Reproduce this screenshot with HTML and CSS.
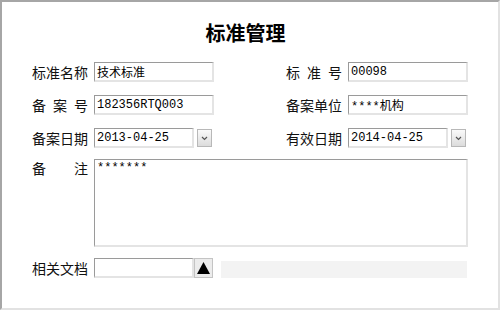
FILE: index.html
```html
<!DOCTYPE html>
<html lang="zh-CN">
<head>
  <meta charset="UTF-8" />
  <title>标准管理</title>
  <link rel="stylesheet" href="styles.css">
</head>
<body>
  <div class="frame">
    <h1 class="title">标准管理</h1>

    <div class="form">
      <!-- row 1 -->
      <div class="row">
        <label class="lbl">标准名称</label>
        <input class="txt" type="text" value="技术标准">
        <span></span>
        <label class="lbl">标准号</label>
        <input class="txt" type="text" value="00098">
      </div>

      <!-- row 2 -->
      <div class="row">
        <label class="lbl">备案号</label>
        <input class="txt" type="text" value="182356RTQ003">
        <span></span>
        <label class="lbl">备案单位</label>
        <input class="txt" type="text" value="****机构">
      </div>

      <!-- row 3: dates -->
      <div class="row row-last">
        <label class="lbl">备案日期</label>
        <div class="date">
          <input class="txt" type="text" value="2013-04-25">
          <span class="drop">
            <svg width="7" height="5" viewBox="0 0 7 5"><path d="M1 1 L3.5 3.5 L6 1" fill="none" stroke="#555" stroke-width="1.2"/></svg>
          </span>
        </div>
        <span></span>
        <label class="lbl">有效日期</label>
        <div class="date">
          <input class="txt" type="text" value="2014-04-25">
          <span class="drop">
            <svg width="7" height="5" viewBox="0 0 7 5"><path d="M1 1 L3.5 3.5 L6 1" fill="none" stroke="#555" stroke-width="1.2"/></svg>
          </span>
        </div>
      </div>

      <!-- memo -->
      <div class="row memo">
        <label class="lbl">备注</label>
        <textarea class="area">*******</textarea>
      </div>

      <!-- attachment -->
      <div class="row">
        <label class="lbl">相关文档</label>
        <div class="file">
          <input class="txt" type="text" value="">
          <span class="up">
            <svg width="13" height="12" viewBox="0 0 13 12"><path d="M6.5 0 L13 12 L0 12 Z" fill="#000"/></svg>
          </span>
        </div>
        <div class="bar"></div>
      </div>
    </div>
  </div>
</body>
</html>
```

FILE: styles.css
```css
body {
  margin: 0;
  background: #fff;
  font-family: "Noto Sans CJK SC", "Liberation Sans", sans-serif;
  color: #000;
}
.frame {
  width: 500px;
  height: 310px;
  box-sizing: border-box;
  border-top: 2px solid #a6a6a6;
  border-left: 2px solid #a6a6a6;
  border-right: 2px solid #e2e2e2;
  border-bottom: 2px solid #e2e2e2;
  background: #fff;
}
.title {
  margin: 0;
  padding: 17px 9px 0 0;
  height: 28px;
  line-height: 28px;
  text-align: center;
  font-size: 20px;
  font-weight: 700;
}
.form {
  padding: 15px 0 0 30px;
}
.row {
  display: grid;
  grid-template-columns: 56px 120px 60px 56px 120px;
  column-gap: 6px;
  height: 20px;
  margin-bottom: 13px;
  align-items: center;
}
.row.row-last {
  margin-bottom: 11px;
}
.row.memo {
  height: 88px;
  align-items: start;
  margin-bottom: 11px;
}
.lbl {
  font-size: 14px;
  line-height: 18px;
  text-align: justify;
  text-align-last: justify;
  color: #111;
}
.txt {
  box-sizing: border-box;
  width: 100%;
  height: 20px;
  margin: 0;
  padding: 0 2px;
  border-style: solid;
  border-width: 1px 2px 2px 1px;
  border-color: #9a9a9a #e4e4e4 #e4e4e4 #9a9a9a;
  font-family: "Liberation Mono", "Noto Sans CJK SC", monospace;
  font-size: 12px;
  color: #000;
  background: #fff;
  outline: none;
}
.date {
  display: flex;
  align-items: center;
  gap: 3px;
}
.date .txt {
  width: 100px;
}
.drop {
  box-sizing: border-box;
  width: 15px;
  height: 18px;
  border: 1px solid #b8b8b8;
  background: linear-gradient(#fafafa, #dcdcdc);
  display: flex;
  align-items: center;
  justify-content: center;
}
.memo .area {
  grid-column: 2 / 6;
  box-sizing: border-box;
  width: 374px;
  height: 88px;
  margin: 0;
  padding: 1px 2px;
  resize: none;
  border-style: solid;
  border-width: 1px 2px 2px 1px;
  border-color: #9a9a9a #e4e4e4 #e4e4e4 #9a9a9a;
  font-family: "Liberation Mono", monospace;
  font-size: 12px;
  outline: none;
}
.file {
  display: flex;
  align-items: center;
}
.file .txt {
  width: 100px;
}
.up {
  box-sizing: border-box;
  width: 19px;
  height: 20px;
  border: 1px solid #c4c4c4;
  background: #ececec;
  display: flex;
  align-items: center;
  justify-content: center;
}
.bar {
  grid-column: 3 / 6;
  height: 17px;
  margin: 3px 1px 0 1px;
  background: #f3f3f3;
}
```
